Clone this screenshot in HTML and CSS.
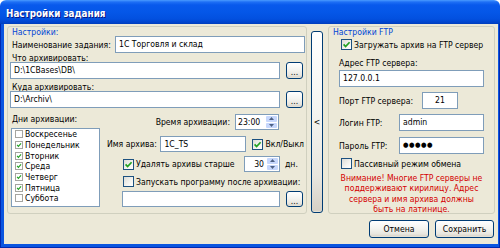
FILE: index.html
```html
<!DOCTYPE html>
<html lang="ru">
<head>
    <meta charset="UTF-8">
    <title>Настройки задания</title>
    <link rel="stylesheet" href="styles.css">
</head>
<body>
    <div class="window">
        <div class="titlebar">Настройки задания</div>
        <div class="frame">
            <div class="client">
                <div class="main">
                    <div class="group group-task">
                        <div class="legend">Настройки:</div>

                        <div class="row row-name">
                            <span class="lbl">Наименование задания:</span>
                            <div class="edit edit-name">1С Торговля и склад</div>
                        </div>

                        <div class="lbl lbl-block">Что архивировать:</div>
                        <div class="row">
                            <div class="edit edit-path">D:\1CBases\DB\</div>
                            <button class="btn btn-dots">...</button>
                        </div>

                        <div class="lbl lbl-block lbl-to">Куда архивировать:</div>
                        <div class="row">
                            <div class="edit edit-path">D:\Archiv\</div>
                            <button class="btn btn-dots">...</button>
                        </div>

                        <div class="lower">
                            <div class="days-col">
                                <div class="lbl lbl-days">Дни архивации:</div>
                                <ul class="days">
                                    <li><span class="cb-small"></span>Воскресенье</li>
                                    <li><span class="cb-small on"></span>Понедельник</li>
                                    <li><span class="cb-small on"></span>Вторник</li>
                                    <li><span class="cb-small on"></span>Среда</li>
                                    <li><span class="cb-small on"></span>Четверг</li>
                                    <li><span class="cb-small on"></span>Пятница</li>
                                    <li><span class="cb-small"></span>Суббота</li>
                                </ul>
                            </div>

                            <div class="opts-col">
                                <div class="row row-time">
                                    <span class="lbl">Время архивации:</span>
                                    <div class="spin spin-time">
                                        <span class="spin-val">23:00</span>
                                        <span class="spin-btns"><span class="spin-up"></span><span class="spin-down"></span></span>
                                    </div>
                                </div>

                                <div class="row row-arch">
                                    <span class="lbl">Имя архива:</span>
                                    <div class="edit edit-arch">1C_TS</div>
                                    <span class="cb on"></span>
                                    <span class="lbl cb-text">Вкл/Выкл</span>
                                </div>

                                <div class="row row-del">
                                    <span class="cb on"></span>
                                    <span class="lbl cb-text del-text">Удалять архивы старше</span>
                                    <div class="spin spin-days">
                                        <span class="spin-val">30</span>
                                        <span class="spin-btns"><span class="spin-up"></span><span class="spin-down"></span></span>
                                    </div>
                                    <span class="lbl dn">дн.</span>
                                </div>

                                <div class="row row-run">
                                    <span class="cb"></span>
                                    <span class="lbl cb-text">Запускать программу после архивации:</span>
                                </div>

                                <div class="row row-prog">
                                    <div class="edit edit-prog"></div>
                                    <button class="btn btn-dots">...</button>
                                </div>
                            </div>
                        </div>
                    </div>

                    <button class="btn side-btn">&lt;</button>

                    <div class="group group-ftp">
                        <div class="legend">Настройки FTP</div>

                        <div class="row row-upload">
                            <span class="cb on"></span>
                            <span class="lbl cb-text">Загружать архив на FTP сервер</span>
                        </div>

                        <div class="lbl lbl-block lbl-addr">Адрес FTP сервера:</div>
                        <div class="edit edit-addr">127.0.0.1</div>

                        <div class="row row-port">
                            <span class="lbl">Порт FTP сервера:</span>
                            <div class="edit edit-port">21</div>
                        </div>

                        <div class="row row-login">
                            <span class="lbl">Логин FTP:</span>
                            <div class="edit edit-login">admin</div>
                        </div>

                        <div class="row row-pass">
                            <span class="lbl">Пароль FTP:</span>
                            <div class="edit edit-login edit-pass">●●●●●</div>
                        </div>

                        <div class="row row-passive">
                            <span class="cb"></span>
                            <span class="lbl cb-text">Пассивный режим обмена</span>
                        </div>

                        <p class="warning">Внимание! Многие FTP серверы не<br>поддерживают кирилицу. Адрес<br>сервера и имя архива должны<br>быть на латинице.</p>
                    </div>
                </div>

                <div class="footer">
                    <button class="btn btn-cancel">Отмена</button>
                    <button class="btn btn-save">Сохранить</button>
                </div>
            </div>
        </div>
    </div>
</body>
</html>
```

FILE: styles.css
```css
* {
    box-sizing: border-box;
}

body {
    margin: 0;
    font-family: "DejaVu Sans Condensed", "Liberation Sans", sans-serif;
    font-size: 8.6px;
    color: #000;
}

.window {
    width: 500px;
    height: 248px;
    display: flex;
    flex-direction: column;
}

.titlebar {
    height: 24px;
    padding: 2px 0 0 6px;
    display: flex;
    align-items: center;
    font-size: 9.8px;
    font-weight: bold;
    color: #fff;
    text-shadow: 1px 1px 0 #0a1883;
    background: linear-gradient(180deg, #4a9bff 0, #1e6ff5 2px, #0859ec 5px, #0557e8 12px, #0250df 19px, #0042c8 23px, #003cb8 24px);
    border-radius: 6px 6px 0 0;
}

.frame {
    flex: 1;
    display: flex;
    padding: 0 3px 4px 4px;
    background: #0a55e0;
    box-shadow: inset 1px 0 #0028b0, inset -1px 0 #0028b0, inset 0 -1px #0028b0;
}

.client {
    flex: 1;
    display: flex;
    flex-direction: column;
    padding: 2px 3px 0 3px;
    background: #ece9d8;
}

.main {
    display: flex;
    height: 188px;
}

.group {
    height: 188px;
    border: 1px solid #d0d0bf;
    border-radius: 3px;
}

.group-task {
    width: 300px;
    padding: 0 1px 0 2px;
}

.group-ftp {
    width: 167px;
    margin-left: 5px;
    padding: 0 10px;
}

.legend {
    height: 9px;
    line-height: 10px;
    color: #0046d5;
    padding-left: 2px;
}

.group-ftp .legend {
    padding-left: 0;
    margin-left: -6px;
}

.row {
    display: flex;
    align-items: center;
}

.lbl {
    white-space: nowrap;
    line-height: 10px;
}

.lbl-block {
    height: 9px;
    padding-left: 2px;
}

.lbl-to {
    margin-top: 3px;
}

/* text fields */
.edit {
    height: 17px;
    line-height: 15px;
    padding: 0 3px;
    border: 1px solid #7f9db9;
    background: #fff;
    white-space: nowrap;
    overflow: hidden;
}

.row-name {
    height: 17px;
    padding-left: 2px;
}

.edit-name {
    width: 190px;
    margin-left: auto;
}

.edit-path {
    width: 270px;
}

.btn {
    font-family: inherit;
    font-size: 8.6px;
    color: #000;
    padding: 0;
    border: 1px solid #003c74;
    border-radius: 3px;
    background: linear-gradient(180deg, #fff 0, #f4f4f0 45%, #e8e6df 80%, #d6d0c5 100%);
    box-shadow: inset 0 -1px #e3e0d5;
}

.btn-dots {
    width: 17px;
    height: 17px;
    margin-left: 6px;
    line-height: 19px;
}

/* lower part */
.lower {
    display: flex;
}

.days-col {
    width: 91px;
}

.lbl-days {
    margin-top: 6px;
    padding-left: 2px;
}

.days {
    list-style-type: none;
    margin: 4px 0 0 1px;
    padding: 0 0 0 3px;
    width: 89px;
    height: 79px;
    border: 1px solid #7f9db9;
    background: #fff;
}

.days li {
    height: 10.7px;
    display: flex;
    align-items: center;
    line-height: 10px;
}

.cb-small {
    width: 8px;
    height: 8px;
    margin-right: 2px;
    border: 1px solid #a5a5a0;
    background: #fff;
    flex-shrink: 0;
}

.cb {
    width: 11px;
    height: 11px;
    border: 1px solid #1c5180;
    background: linear-gradient(135deg, #dcdcd7 0, #f4f4f0 60%, #fff 100%);
    flex-shrink: 0;
}

.cb.on {
    background-image: url("data:image/svg+xml,%3Csvg xmlns='http://www.w3.org/2000/svg' viewBox='0 0 9 9'%3E%3Cpath d='M1.6 4.4 L3.6 6.6 L7.6 2.2' fill='none' stroke='%2321a121' stroke-width='1.7'/%3E%3C/svg%3E"), linear-gradient(135deg, #dcdcd7 0, #f4f4f0 60%, #fff 100%);
    background-size: 100% 100%, auto;
}

.cb-small.on {
    background-image: url("data:image/svg+xml,%3Csvg xmlns='http://www.w3.org/2000/svg' viewBox='0 0 9 9'%3E%3Cpath d='M1.6 4.4 L3.6 6.6 L7.6 2.2' fill='none' stroke='%2321a121' stroke-width='1.7'/%3E%3C/svg%3E");
    background-size: 100% 100%;
}

.cb-text {
    margin-left: 2px;
}

.opts-col {
    flex: 1;
}

.row-time {
    margin-top: 6px;
    height: 16px;
    justify-content: flex-end;
    padding-right: 26px;
}

.spin {
    display: flex;
    height: 16px;
    border: 1px solid #7f9db9;
    background: #fff;
}

.spin-time {
    width: 44px;
    margin-left: 5px;
}

.spin-days {
    width: 36px;
}

.spin-val {
    flex: 1;
    line-height: 14px;
    padding-left: 2px;
}

.spin-days .spin-val {
    text-align: right;
    padding: 0 2px 0 0;
}

.spin-btns {
    width: 13px;
    display: flex;
    flex-direction: column;
    gap: 1px;
    padding: 1px;
}

.spin-up,
.spin-down {
    flex: 1;
    border-radius: 1px;
    background-color: #c6d7fc;
    background-repeat: no-repeat;
    background-position: center;
}

.spin-up {
    background-image: url("data:image/svg+xml,%3Csvg xmlns='http://www.w3.org/2000/svg' width='5' height='3'%3E%3Cpath d='M0 3 L2.5 0 L5 3Z' fill='%234d6185'/%3E%3C/svg%3E");
}

.spin-down {
    background-image: url("data:image/svg+xml,%3Csvg xmlns='http://www.w3.org/2000/svg' width='5' height='3'%3E%3Cpath d='M0 0 L2.5 3 L5 0Z' fill='%234d6185'/%3E%3C/svg%3E");
}

.row-arch {
    margin-top: 6px;
    height: 16px;
    padding-left: 6px;
}

.edit-arch {
    width: 86px;
    height: 16px;
    line-height: 14px;
    margin-left: auto;
}

.row-arch .cb {
    margin-left: 6px;
}

.row-arch .cb-text {
    margin-right: 1px;
}

.row-del {
    margin-top: 4px;
    height: 16px;
    padding-left: 22px;
}

.del-text {
    width: 108px;
}

.dn {
    margin-left: 5px;
}

.row-run {
    margin-top: 4px;
    height: 11px;
    padding-left: 22px;
}

.row-prog {
    margin-top: 4px;
    padding-left: 21px;
}

.edit-prog {
    width: 158px;
    height: 16px;
}

.row-prog .btn-dots {
    height: 16px;
}

/* side toggle */
.side-btn {
    width: 12px;
    height: 182px;
    margin: 5px 0 0 4px;
}

/* ftp part */
.row-upload {
    margin-top: 3px;
    height: 11px;
    padding-left: 2px;
}

.lbl-addr {
    margin-top: 8px;
    padding-left: 0;
}

.edit-addr {
    margin-top: 3px;
}

.row-port {
    margin-top: 5px;
    height: 17px;
}

.edit-port {
    width: 36px;
    margin-left: auto;
    margin-right: 26px;
    text-align: center;
}

.row-login {
    margin-top: 5px;
    height: 17px;
}

.edit-login {
    width: 85px;
    margin-left: auto;
}

.row-pass {
    margin-top: 6px;
    height: 17px;
}

.edit-pass {
    font-size: 7px;
    letter-spacing: 0.5px;
}

.row-passive {
    margin-top: 4px;
    height: 11px;
    padding-left: 2px;
}

.warning {
    margin: 4px -6px 0;
    line-height: 10.4px;
    white-space: nowrap;
    text-align: center;
    color: #d40000;
}

/* buttons */
.footer {
    display: flex;
    justify-content: flex-end;
    gap: 6px;
    margin-top: 6px;
    padding-right: 1px;
}

.btn-cancel {
    width: 60px;
    height: 18px;
}

.btn-save {
    width: 59px;
    height: 18px;
}
```
